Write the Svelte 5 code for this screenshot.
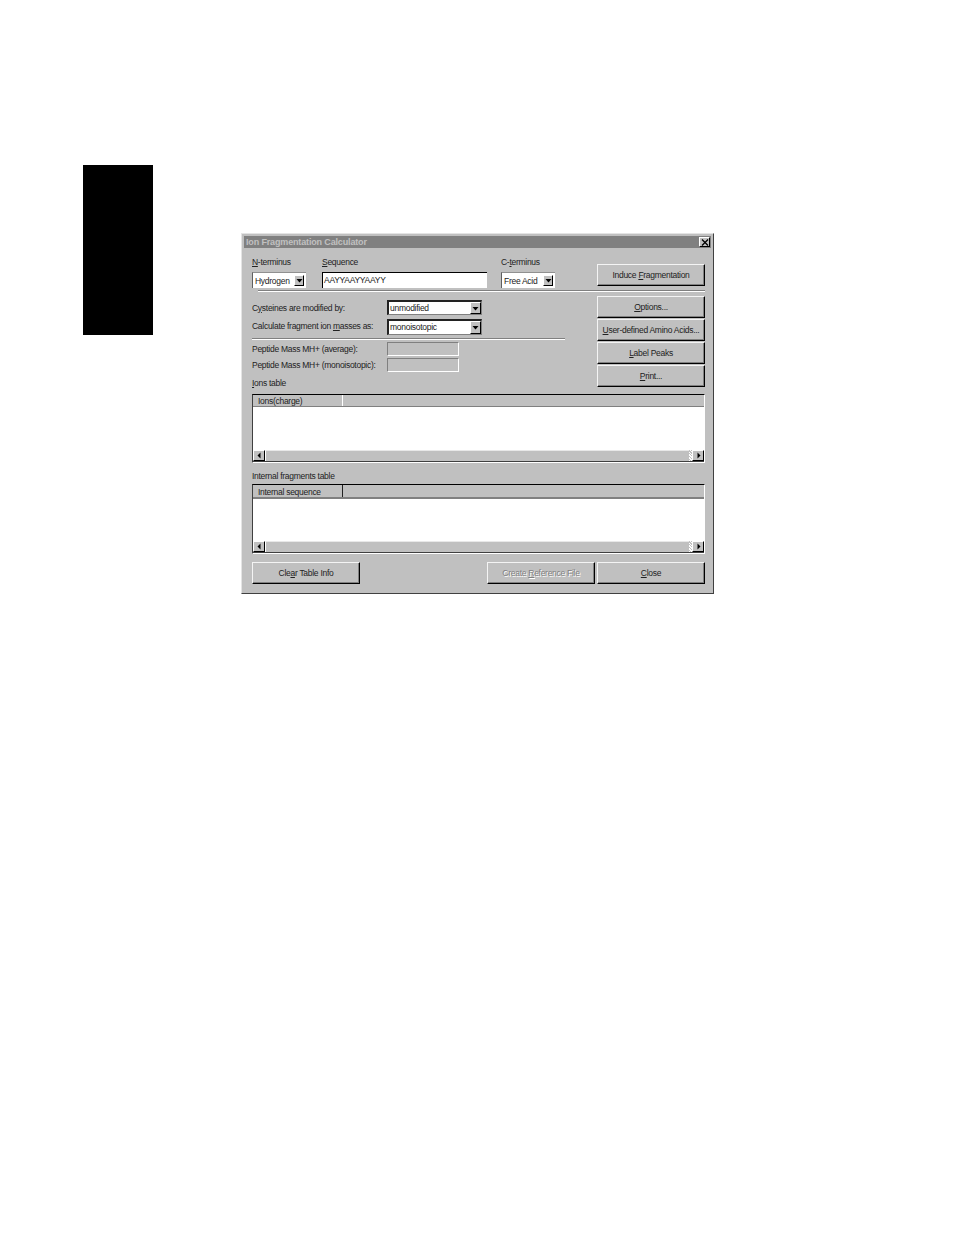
<script lang="ts">
    const sideButtons = [
        { key: "O", after: "ptions..." },
        { key: "U", after: "ser-defined Amino Acids..." },
        { key: "L", after: "abel Peaks" },
        { key: "P", after: "rint..." }
    ];
</script>

{#snippet arrow(dir)}
    <span class="arrow-btn">
        <svg width="7" height="7" viewBox="0 0 7 7">
            {#if dir === "down"}<path d="M0.5 2h6L3.5 5.5z" fill="#000" />{/if}
            {#if dir === "left"}<path d="M4.5 0.5v6L1.5 3.5z" fill="#000" />{/if}
            {#if dir === "right"}<path d="M2.5 0.5v6L5.5 3.5z" fill="#000" />{/if}
        </svg>
    </span>
{/snippet}

{#snippet table(title, bodyHeight, variant)}
    <div class="table-frame {variant}">
        <div class="table-head">
            <span class="head-cell">{title}</span>
            <span class="head-rest"></span>
        </div>
        <div class="table-body" style="height: {bodyHeight}px"></div>
        <div class="scrollbar">
            {@render arrow("left")}
            <span class="track"></span>
            <span class="end-dither"></span>
            {@render arrow("right")}
        </div>
    </div>
{/snippet}

<div class="page">
    <div class="side-tab"></div>

    <div class="dialog">
        <div class="titlebar">
            <span class="title">Ion Fragmentation Calculator</span>
            <span class="close-x">
                <svg width="8" height="7" viewBox="0 0 8 7">
                    <path d="M1 0.5l6 6M7 0.5l-6 6" stroke="#000" stroke-width="1.3" fill="none" />
                </svg>
            </span>
        </div>

        <div class="content">
            <div class="top-row">
                <div class="field nterm">
                    <span class="label"><u>N</u>-terminus</span>
                    <div class="combo small">
                        <span class="combo-text">Hydrogen</span>
                        {@render arrow("down")}
                    </div>
                </div>
                <div class="field seq">
                    <span class="label"><u>S</u>equence</span>
                    <div class="input">AAYYAAYYAAYY</div>
                </div>
                <div class="field cterm">
                    <span class="label">C-<u>t</u>erminus</span>
                    <div class="combo small">
                        <span class="combo-text">Free Acid</span>
                        {@render arrow("down")}
                    </div>
                </div>
                <button class="btn induce">Induce <u>F</u>ragmentation</button>
            </div>

            <hr class="groove first" />

            <div class="mid-row">
                <div class="mid-left">
                    <div class="line one">
                        <span class="line-label">C<u>y</u>steines are modified by:</span>
                        <div class="combo wide">
                            <span class="combo-text">unmodified</span>
                            {@render arrow("down")}
                        </div>
                    </div>
                    <div class="line two">
                        <span class="line-label raised">Calculate fragment ion <u>m</u>asses as:</span>
                        <div class="combo wide">
                            <span class="combo-text">monoisotopic</span>
                            {@render arrow("down")}
                        </div>
                    </div>
                    <hr class="groove second" />
                    <div class="line three">
                        <span class="line-label">Peptide Mass MH+ (average):</span>
                        <span class="readonly"></span>
                    </div>
                    <div class="line four">
                        <span class="line-label">Peptide Mass MH+ (monoisotopic):</span>
                        <span class="readonly"></span>
                    </div>
                    <div class="label ions"><u>I</u>ons table</div>
                </div>
                <div class="mid-right">
                    {#each sideButtons as b}
                        <button class="btn"><u>{b.key}</u>{b.after}</button>
                    {/each}
                </div>
            </div>

            {@render table("Ions(charge)", 43, "plain")}
            <div class="label internal">Internal fragments table</div>
            {@render table("Internal sequence", 42, "strong")}

            <div class="bottom-row">
                <button class="btn clear">Cle<u>a</u>r Table Info</button>
                <span class="spacer"></span>
                <button class="btn create" disabled>Create <u>R</u>eference File</button>
                <button class="btn close"><u>C</u>lose</button>
            </div>
        </div>
    </div>
</div>

<style>
    :global(body) {
        margin: 0;
        background: #fff;
    }

    .page {
        display: flex;
        align-items: flex-start;
        height: 1235px;
        padding: 165px 0 0 83px;
        box-sizing: border-box;
        font-family: "Liberation Sans", Arial, sans-serif;
        font-size: 8.5px;
        letter-spacing: -0.28px;
        color: #222;
    }

    .side-tab {
        width: 70px;
        height: 170px;
        background: #000;
        flex: none;
    }

    .dialog {
        margin: 68px 0 0 88px;
        width: 473px;
        height: 361px;
        box-sizing: border-box;
        flex: none;
        background: #c0c0c0;
        border: 1px solid;
        border-color: #e4e4e4 #404040 #404040 #e4e4e4;
        padding: 2px;
    }

    .titlebar {
        height: 12px;
        background: #808080;
        display: flex;
        align-items: center;
        justify-content: space-between;
        padding: 0 1px 0 2px;
    }

    .title {
        color: #c0c0c0;
        font-size: 9px;
        font-weight: bold;
        letter-spacing: -0.15px;
    }

    .close-x {
        width: 11px;
        height: 10px;
        box-sizing: border-box;
        background: #c0c0c0;
        border: 1px solid;
        border-color: #fff #000 #000 #fff;
        display: flex;
        align-items: center;
        justify-content: center;
    }

    .content {
        padding: 0 6px 0 8px;
    }

    .top-row {
        display: flex;
        align-items: flex-start;
        height: 42px;
    }

    .field {
        display: flex;
        flex-direction: column;
        padding-top: 9px;
        gap: 4px;
    }

    .label {
        height: 11px;
        line-height: 11px;
        white-space: nowrap;
    }

    .nterm {
        width: 70px;
    }

    .seq {
        width: 179px;
    }

    .cterm {
        width: 96px;
    }

    .combo {
        display: flex;
        align-items: stretch;
        justify-content: space-between;
        box-sizing: border-box;
        background: #fff;
    }

    .combo.small {
        width: 54px;
        height: 16px;
        padding: 2px 2px 2px 1px;
        border-left: 1px solid #606060;
        border-top: 1px solid #909090;
    }

    .combo.small .arrow-btn {
        width: 10px;
    }

    .combo.wide {
        width: 95px;
        border: 1px solid #808080;
        border-top: 2px solid #222;
        border-left: 2px solid #222;
    }

    .line.one .combo.wide {
        height: 15px;
    }

    .line.two .combo.wide {
        height: 16px;
    }

    .combo-text {
        line-height: 12px;
        padding-left: 1px;
        white-space: nowrap;
    }

    .arrow-btn {
        width: 11px;
        flex: none;
        box-sizing: border-box;
        background: #c0c0c0;
        border: 1px solid;
        border-color: #fff #000 #000 #fff;
        display: flex;
        align-items: center;
        justify-content: center;
    }

    .input {
        width: 165px;
        height: 16px;
        line-height: 14px;
        box-sizing: border-box;
        background: #fff;
        border-top: 1px solid #000;
        border-left: 1px solid #000;
        padding-left: 1px;
    }

    .btn {
        display: block;
        box-sizing: border-box;
        width: 108px;
        height: 22px;
        padding: 0;
        margin: 0;
        font: inherit;
        letter-spacing: inherit;
        color: inherit;
        background: #c0c0c0;
        border: 1px solid;
        border-color: #f4f4f4 #000 #000 #f4f4f4;
        box-shadow: inset -1px -1px 0 #808080;
        white-space: nowrap;
        text-align: center;
    }

    .btn.induce {
        margin-top: 16px;
    }

    .groove {
        border: none;
        border-top: 1px solid #808080;
        border-bottom: 1px solid #fff;
        margin: 0;
    }

    .groove.first {
        margin-left: 6px;
    }

    .mid-row {
        display: flex;
        justify-content: space-between;
        height: 102px;
    }

    .mid-left {
        width: 313px;
    }

    .line {
        display: flex;
        align-items: center;
    }

    .line-label {
        width: 135px;
        flex: none;
        white-space: nowrap;
    }

    .line-label.raised {
        padding-bottom: 3px;
    }

    .line.one {
        margin-top: 8px;
    }

    .line.two {
        margin-top: 4px;
    }

    .groove.second {
        margin-top: 3px;
    }

    .line.three {
        margin-top: 2px;
    }

    .line.four {
        margin-top: 2px;
    }

    .readonly {
        width: 72px;
        height: 14px;
        box-sizing: border-box;
        border: 1px solid;
        border-color: #808080 #fff #fff #808080;
    }

    .label.ions {
        margin-top: 6px;
    }

    .mid-right {
        display: flex;
        flex-direction: column;
        padding-top: 4px;
        gap: 1px;
    }

    .table-frame {
        box-sizing: border-box;
        border: 1px solid;
        border-color: #000 #fff #fff #404040;
    }

    .table-head {
        display: flex;
        height: 12px;
        box-sizing: border-box;
        border-bottom: 1px solid #808080;
    }

    .strong .table-head {
        height: 14px;
        border-bottom-width: 2px;
    }

    .head-cell {
        width: 90px;
        box-sizing: border-box;
        padding-left: 5px;
        line-height: 12px;
        border-right: 1px solid #fff;
        white-space: nowrap;
    }

    .strong .head-cell {
        line-height: 14px;
        border-right-color: #222;
    }

    .table-body {
        background: #fff;
    }

    .scrollbar {
        display: flex;
        height: 12px;
        box-sizing: border-box;
        border-bottom: 1px solid #404040;
    }

    .scrollbar .arrow-btn {
        width: 12px;
    }

    .track {
        flex: 1;
        background: #c0c0c0;
        border-top: 1px solid #e8e8e8;
        border-left: 1px solid #fff;
    }

    .end-dither {
        width: 3px;
        background: repeating-linear-gradient(45deg, #fff 0 1px, #c0c0c0 1px 2px);
    }

    .label.internal {
        margin-top: 8px;
        margin-bottom: 2px;
    }

    .bottom-row {
        display: flex;
        margin-top: 8px;
        gap: 2px;
    }

    .spacer {
        flex: 1;
    }

    .btn.create {
        color: #808080;
        text-shadow: 1px 1px 0 #fff;
    }

    u {
        text-underline-offset: 1px;
    }
</style>
